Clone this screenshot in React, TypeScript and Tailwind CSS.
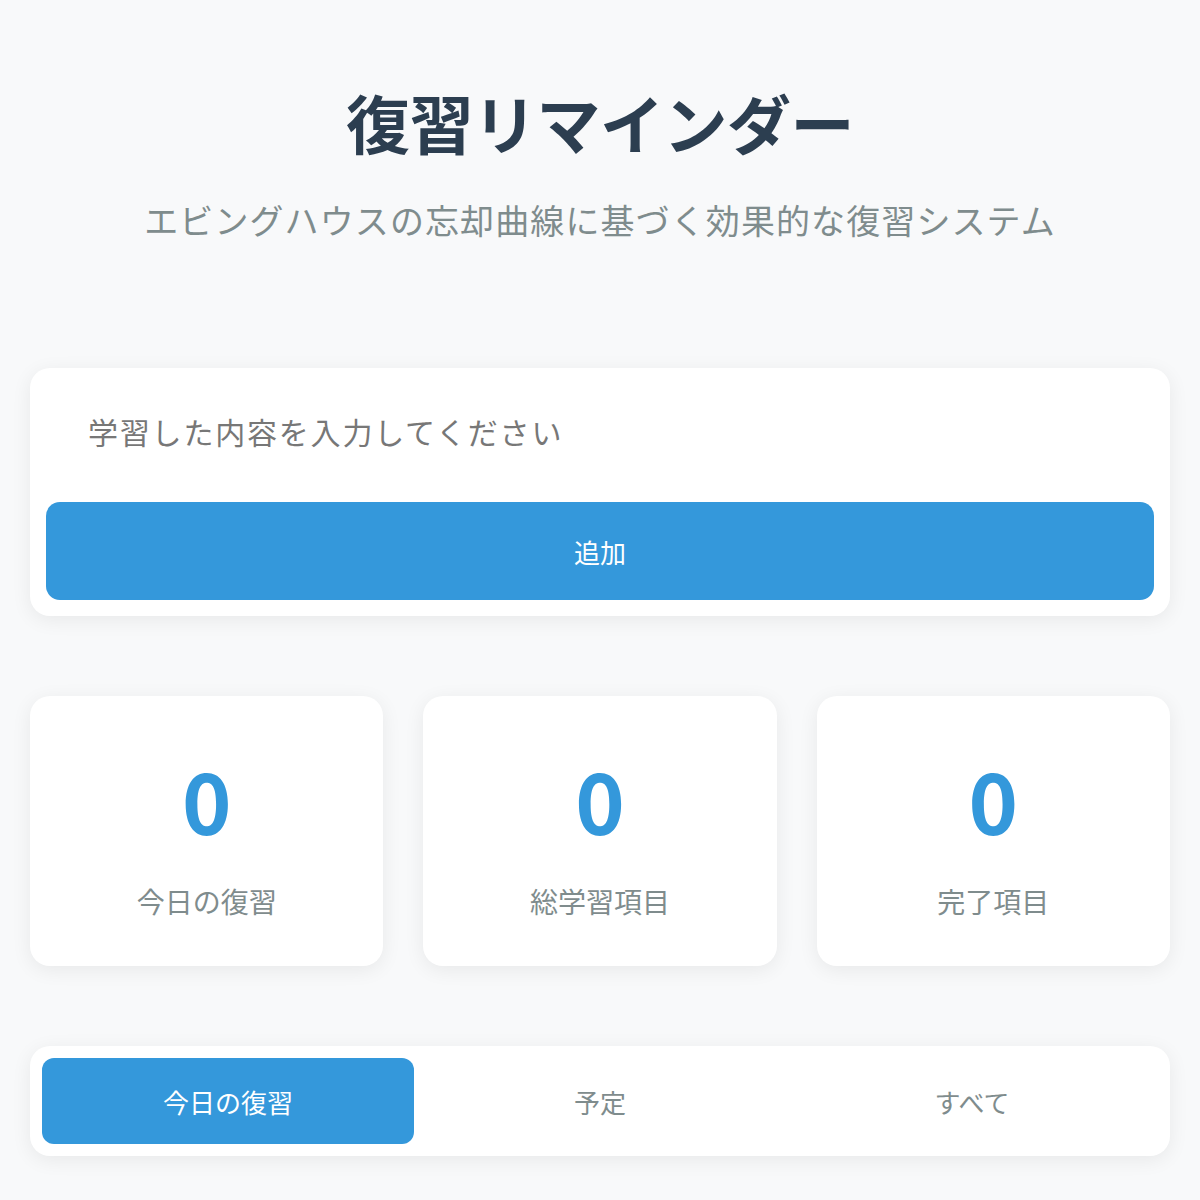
import React from "react";

const font = { fontFamily: '"Noto Sans CJK JP", "Noto Sans", sans-serif' };

export default function App() {
  return (
    <div className="min-h-[1200px] bg-[#f8f9fa] px-[30px]" style={font}>
      <div className="pt-[83px] flex flex-col items-center">
        <h1 className="text-[64px] leading-[77px] font-bold text-[#2c3e50] tracking-[-0.5px]">復習リマインダー</h1>
        <p className="mt-[34px] text-[34px] leading-[51px] text-[#7f8c8d] tracking-[1.1px]">エビングハウスの忘却曲線に基づく効果的な復習システム</p>
      </div>

      <div className="mt-[123px] bg-white rounded-[20px] shadow-[0_4px_20px_rgba(0,0,0,0.07)] p-4">
        <div className="h-[102px] flex items-center pl-[42px] pb-[8px]">
          <span className="text-[30px] text-[#777] tracking-[1.8px]">学習した内容を入力してください</span>
        </div>
        <button className="mt-4 w-full h-[98px] rounded-[14px] bg-[#3498db] text-white text-[26px] flex items-center justify-center">追加</button>
      </div>

      <div className="mt-[80px] grid grid-cols-3 gap-[40px]">
        {[
          ["0", "今日の復習"],
          ["0", "総学習項目"],
          ["0", "完了項目"],
        ].map(([n, l], i) => (
          <div key={i} className="h-[270px] bg-white rounded-[20px] shadow-[0_4px_20px_rgba(0,0,0,0.07)] flex flex-col items-center">
            <div className="mt-[53px] text-[84px] leading-[100px] font-bold text-[#3498db]">{n}</div>
            <div className="mt-[32px] text-[28px] leading-[40px] text-[#7f8c8d]">{l}</div>
          </div>
        ))}
      </div>

      <div className="mt-[80px] bg-white rounded-[20px] shadow-[0_4px_20px_rgba(0,0,0,0.07)] p-3 grid grid-cols-3">
        <div className="h-[86px] rounded-[12px] bg-[#3498db] text-white text-[26px] flex items-center justify-center">今日の復習</div>
        <div className="h-[86px] text-[#7f8c8d] text-[26px] flex items-center justify-center">予定</div>
        <div className="h-[86px] text-[#7f8c8d] text-[26px] flex items-center justify-center">すべて</div>
      </div>
    </div>
  );
}
